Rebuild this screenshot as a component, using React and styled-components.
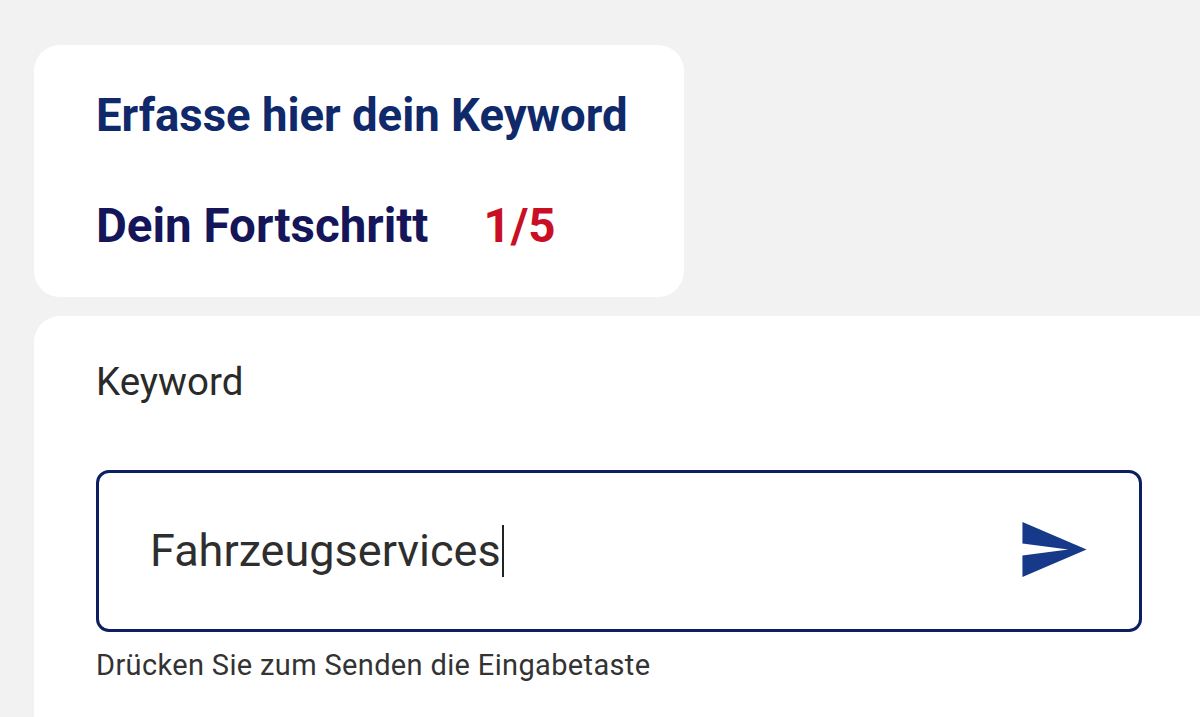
import React from "react";
import styled, { createGlobalStyle } from "styled-components";

const Global = createGlobalStyle`
  html, body { margin: 0; padding: 0; background: #f2f2f2; overflow: hidden; }
  body { font-family: Roboto, "Noto Sans", sans-serif; }
`;

const Page = styled.div`
  width: 1200px;
  height: 717px;
  padding: 45px 0 0 34px;
  box-sizing: border-box;
  display: flex;
  flex-direction: column;
  gap: 19px;
  overflow: hidden;
`;

const HeaderCard = styled.section`
  width: 650px;
  height: 252px;
  box-sizing: border-box;
  background: #fff;
  border-radius: 26px;
  padding: 45px 0 0 62px;
  display: flex;
  flex-direction: column;
  gap: 58px;
`;

const Title = styled.h1`
  margin: 0;
  font-size: 45.5px;
  line-height: 52px;
  font-weight: 700;
  color: #10296b;
`;

const ProgressRow = styled.div`
  display: flex;
  align-items: baseline;
  gap: 55px;
  font-size: 47.5px;
  line-height: 52px;
  font-weight: 700;
`;

const ProgressLabel = styled.span`
  color: #15165a;
`;

const ProgressValue = styled.span`
  color: #c80f24;
`;

const FormCard = styled.section`
  width: 1200px;
  flex: 1;
  background: #fff;
  border-radius: 26px 26px 0 0;
  box-sizing: border-box;
  padding: 44px 0 0 62px;
`;

const Label = styled.div`
  font-size: 38.5px;
  line-height: 44px;
  color: #2a2a2a;
  margin-bottom: 66px;
`;

const InputBox = styled.div`
  width: 1046px;
  height: 162px;
  box-sizing: border-box;
  border: 3px solid #0c1f5e;
  border-radius: 13px;
  display: flex;
  align-items: center;
  padding: 0 52px 0 51px;
`;

const Value = styled.div`
  flex: 1;
  font-size: 45px;
  line-height: 52px;
  color: #2e2e2e;
  display: flex;
  align-items: center;
`;

const Caret = styled.span`
  display: inline-block;
  width: 2px;
  height: 52px;
  background: #222;
  margin-left: 1px;
`;

const SendButton = styled.button`
  border: none;
  background: none;
  padding: 0;
  display: flex;
  cursor: pointer;
  margin-top: -4px;
`;

const Hint = styled.div`
  margin-top: 16px;
  font-size: 29px;
  line-height: 34px;
  letter-spacing: 0.35px;
  color: #333;
`;

export default function App() {
  return (
    <>
      <Global />
      <Page>
        <HeaderCard>
          <Title>Erfasse hier dein Keyword</Title>
          <ProgressRow>
            <ProgressLabel>Dein Fortschritt</ProgressLabel>
            <ProgressValue>1/5</ProgressValue>
          </ProgressRow>
        </HeaderCard>
        <FormCard>
          <Label>Keyword</Label>
          <InputBox>
            <Value>
              Fahrzeugservices
              <Caret />
            </Value>
            <SendButton aria-label="Senden">
              <svg width="65" height="55" viewBox="2 3 21 18">
                <path d="M2.01 21L23 12 2.01 3 2 10l15 2-15 2z" fill="#17398a" />
              </svg>
            </SendButton>
          </InputBox>
          <Hint>Drücken Sie zum Senden die Eingabetaste</Hint>
        </FormCard>
      </Page>
    </>
  );
}
